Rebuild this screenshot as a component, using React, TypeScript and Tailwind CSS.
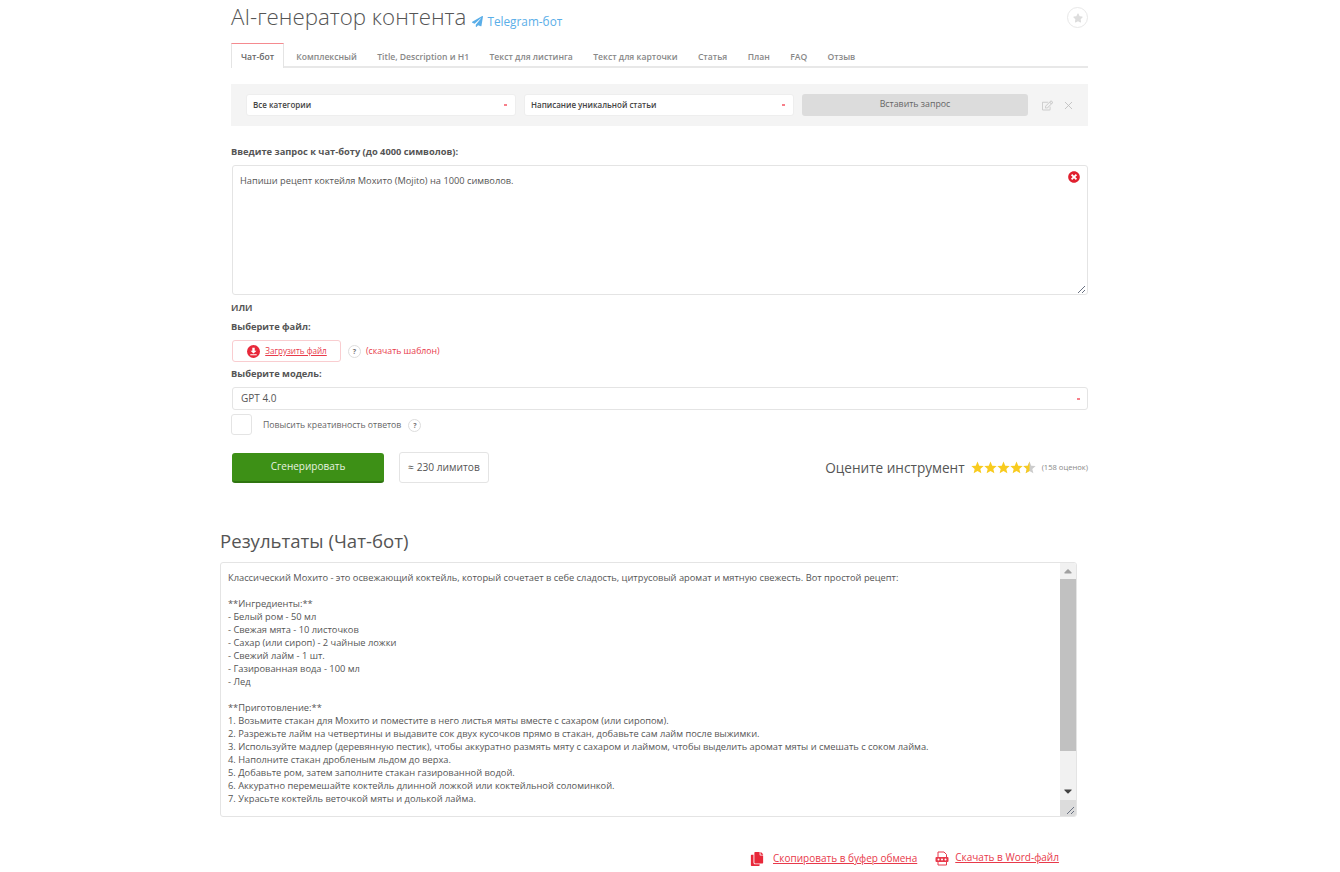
import React from 'react';
import { FaPaperPlane, FaStar, FaTimesCircle, FaCopy, FaRegEdit, FaCaretUp, FaCaretDown } from 'react-icons/fa';
import { X } from 'lucide-react';

const tabs = ['Комплексный', 'Title, Description и H1', 'Текст для листинга', 'Текст для карточки', 'Статья', 'План', 'FAQ', 'Отзыв'];

const resultLines = [
  'Классический Мохито - это освежающий коктейль, который сочетает в себе сладость, цитрусовый аромат и мятную свежесть. Вот простой рецепт:',
  '',
  '**Ингредиенты:**',
  '- Белый ром - 50 мл',
  '- Свежая мята - 10 листочков',
  '- Сахар (или сироп) - 2 чайные ложки',
  '- Свежий лайм - 1 шт.',
  '- Газированная вода - 100 мл',
  '- Лед',
  '',
  '**Приготовление:**',
  '1. Возьмите стакан для Мохито и поместите в него листья мяты вместе с сахаром (или сиропом).',
  '2. Разрежьте лайм на четвертины и выдавите сок двух кусочков прямо в стакан, добавьте сам лайм после выжимки.',
  '3. Используйте мадлер (деревянную пестик), чтобы аккуратно размять мяту с сахаром и лаймом, чтобы выделить аромат мяты и смешать с соком лайма.',
  '4. Наполните стакан дробленым льдом до верха.',
  '5. Добавьте ром, затем заполните стакан газированной водой.',
  '6. Аккуратно перемешайте коктейль длинной ложкой или коктейльной соломинкой.',
  '7. Украсьте коктейль веточкой мяты и долькой лайма.',
];

const Resize = () => (
  <svg width="9" height="9" viewBox="0 0 9 9" className="text-gray-500">
    <path d="M1 8 8 1M5 8l3-3" stroke="currentColor" strokeWidth="1" />
  </svg>
);

const Hint = () => (
  <span className="w-[13px] h-[13px] rounded-full border border-[#ddd] text-[7px] leading-[11px] text-center text-[#777] font-bold">?</span>
);

const Select = ({ label }: { label: string }) => (
  <div className="w-[270px] h-[22px] bg-white rounded-[3px] border border-[#eee] flex items-center justify-between pl-[6px] pr-[8px] text-[8px] font-semibold text-[#444]">
    <span>{label}</span>
    <span className="w-[3px] h-[2px] bg-[#f77f8a]" />
  </div>
);

const Star = ({ half }: { half?: boolean }) => (
  <svg width="13" height="13" viewBox="0 0 24 24">
    <path d="M12 1l3.2 7.6 8.2.7-6.2 5.4 1.9 8L12 18.4 4.900 22.700l1.900-8L.6 9.300l8.200-.7z" fill={half ? '#ccc' : '#f8cb1e'} />
    {half && <path d="M12 1v17.400L4.900 22.700l1.900-8L.6 9.300l8.200-.7z" fill="#f8cb1e" />}
  </svg>
);

const UploadIcon = () => (
  <svg width="13" height="13" viewBox="0 0 13 13">
    <circle cx="6.500" cy="6.500" r="6.500" fill="#e8283a" />
    <path d="M5.300 2.800h2.400v3h1.800L6.500 8.600 3.500 5.800h1.800zM3.300 9.300h6.400v1H3.300z" fill="#fff" />
  </svg>
);

const WordIcon = () => (
  <svg width="14" height="15" viewBox="0 0 14 15" fill="none">
    <path d="M3 6V1h6l2.500 2.500V6M3 11v3h8.500v-3" stroke="#e8394a" strokeWidth="1" />
    <rect x="0.500" y="6" width="13" height="5" rx="1" fill="#e8394a" />
    <circle cx="3.500" cy="8.500" r="1" fill="#fff" />
    <circle cx="7" cy="8.500" r="1" fill="#fff" />
    <circle cx="10.500" cy="8.500" r="1" fill="#fff" />
  </svg>
);

export default function App() {
  return (
    <div className="h-[872px] overflow-hidden bg-white text-[#555] font-['Open_Sans',sans-serif]">
      <div className="ml-[220px] w-[868px]">
        <div className="ml-[11px]">
          <div className="h-[43px] flex items-start justify-between">
            <div className="flex items-baseline pt-[1px]">
              <h1 className="text-[22.3px] leading-[31px] font-light text-[#555]">AI-генератор контента</h1>
              <a className="ml-[6px] translate-y-[1px] flex items-baseline text-[11.8px] text-[#5aaee8]">
                <FaPaperPlane className="mr-[4px] text-[11px] self-center" />
                Telegram-бот
              </a>
            </div>
            <div className="mt-[7px] w-[21px] h-[21px] rounded-full border border-[#e8e8e8] flex items-center justify-center">
              <FaStar className="text-[10px] text-[#ddd]" />
            </div>
          </div>

          <div className="h-[25px] flex border-b-2 border-[#e8e8e8] text-[8.6px] font-semibold text-[#888]">
            <div className="w-[53px] h-[25px] mr-[2px] pt-[3px] bg-white border-t border-x border-t-[#f58a8f] border-x-[#e4e4e4] text-[#666] flex items-center justify-center">Чат-бот</div>
            {tabs.map((tab, index) => (
              <div key={index} className="px-[10.2px] pt-[5px] flex items-center whitespace-nowrap">{tab}</div>
            ))}
          </div>

          <div className="mt-[16px] h-[42px] bg-[#f4f4f4] flex items-center pl-[15px] gap-[8px]">
            <Select label="Все категории" />
            <Select label="Написание уникальной статьи" />
            <div className="w-[226px] h-[22px] bg-[#dcdcdc] rounded-[3px] flex items-center justify-center text-[8.800px] text-[#666]">Вставить запрос</div>
            <FaRegEdit className="ml-[6px] text-[11px] text-[#ccc]" />
            <X className="ml-[1px] w-[13px] h-[13px] text-[#bbb]" strokeWidth={1.500} />
          </div>

          <div className="mt-[19px] text-[9.300px] leading-[13px] font-bold text-[#555]">Введите запрос к чат-боту (до 4000 символов):</div>

          <div className="relative mt-[7px] ml-[1px] h-[130px] border border-[#e4e4e4] rounded-[3px] pl-[7px] pt-[8px] text-[9.250px] leading-[13px] text-[#555]">
            Напиши рецепт коктейля Мохито (Mojito) на 1000 символов.
            <FaTimesCircle className="absolute right-[7px] top-[5px] text-[12px] text-[#e0202f]" />
            <span className="absolute right-[1px] bottom-[0px]"><Resize /></span>
          </div>

          <div className="mt-[6px] text-[9px] leading-[13px] font-bold text-[#555]">ИЛИ</div>
          <div className="mt-[6px] text-[9.300px] leading-[13px] font-bold text-[#555]">Выберите файл:</div>

          <div className="mt-[7px] ml-[1px] flex items-center">
            <div className="w-[109px] h-[22px] border border-[#f9cdd0] rounded-[3px] flex items-center justify-center gap-[5px] pl-[1px] text-[8.100px] text-[#e8394a]">
              <UploadIcon />
              <span className="underline">Загрузить файл</span>
            </div>
            <span className="ml-[7px] flex"><Hint /></span>
            <span className="ml-[5px] pt-[1px] text-[8.700px] text-[#e8394a]">(скачать шаблон)</span>
          </div>

          <div className="mt-[5px] text-[9.300px] leading-[13px] font-bold text-[#555]">Выберите модель:</div>

          <div className="mt-[7px] ml-[1px] h-[23px] border border-[#e4e4e4] rounded-[3px] flex items-center justify-between pl-[8px] pr-[7px] text-[10px] text-[#555]">
            <span>GPT 4.0</span>
            <span className="w-[3px] h-[2px] bg-[#f77f8a]" />
          </div>

          <div className="mt-[4px] flex items-center">
            <div className="w-[21px] h-[21px] border border-[#e4e4e4] rounded-[3px]" />
            <span className="ml-[11px] pt-[2px] text-[8.700px] text-[#666]">Повысить креативность ответов</span>
            <span className="ml-[7px] pt-[2px] flex"><Hint /></span>
          </div>

          <div className="mt-[17px] ml-[1px] flex items-center">
            <div className="w-[152px] h-[30px] bg-[#3d9016] border-b-2 border-[#2f7510] rounded-[3px] flex items-center justify-center text-[10px] text-[#e8f3e0]">Сгенерировать</div>
            <div className="ml-[15px] w-[90px] h-[31px] border border-[#e4e4e4] rounded-[3px] flex items-center justify-center text-[10.200px] text-[#555]">≈ 230 лимитов</div>
            <div className="ml-auto flex items-center">
              <span className="pt-[1px] text-[13.600px] text-[#555]">Оцените инструмент</span>
              <div className="ml-[6px] flex">
                <Star /><Star /><Star /><Star /><Star half />
              </div>
              <span className="ml-[6px] text-[7.600px] text-[#888]">(158 оценок)</span>
            </div>
          </div>
        </div>

        <h2 className="mt-[45px] text-[18.600px] leading-[25px] text-[#555]">Результаты (Чат-бот)</h2>

        <div className="relative mt-[9px] w-[857px] h-[255px] border border-[#e4e4e4] rounded-[3px] flex overflow-hidden">
          <div className="flex-1 pl-[7px] pt-[8px] text-[9.300px] leading-[13px] text-[#555] whitespace-nowrap overflow-hidden">
            {resultLines.map((line, index) => (
              <div key={index} className="h-[13px]">{line}</div>
            ))}
          </div>
          <div className="w-[16px] bg-[#f1f1f1] flex flex-col items-center">
            <FaCaretUp className="h-[16px] text-[8px] text-[#a0a0a0]" />
            <div className="w-full h-[172px] bg-[#c1c1c1]" />
            <div className="flex-1" />
            <FaCaretDown className="mb-[17px] h-[16px] text-[8px] text-[#444]" />
          </div>
          <span className="absolute right-0 bottom-0 w-[16px] h-[16px] bg-[#dcdcdc] flex items-end justify-end p-[1px]"><Resize /></span>
        </div>

        <div className="mt-[33px] ml-[530px] flex items-center text-[10px] text-[#e8394a]">
          <FaCopy className="text-[14px] text-[#e8283a]" />
          <span className="ml-[9px] underline">Скопировать в буфер обмена</span>
          <span className="ml-[18px] flex"><WordIcon /></span>
          <span className="ml-[6px] mb-[2px] underline">Скачать в Word-файл</span>
        </div>
      </div>
    </div>
  );
}
